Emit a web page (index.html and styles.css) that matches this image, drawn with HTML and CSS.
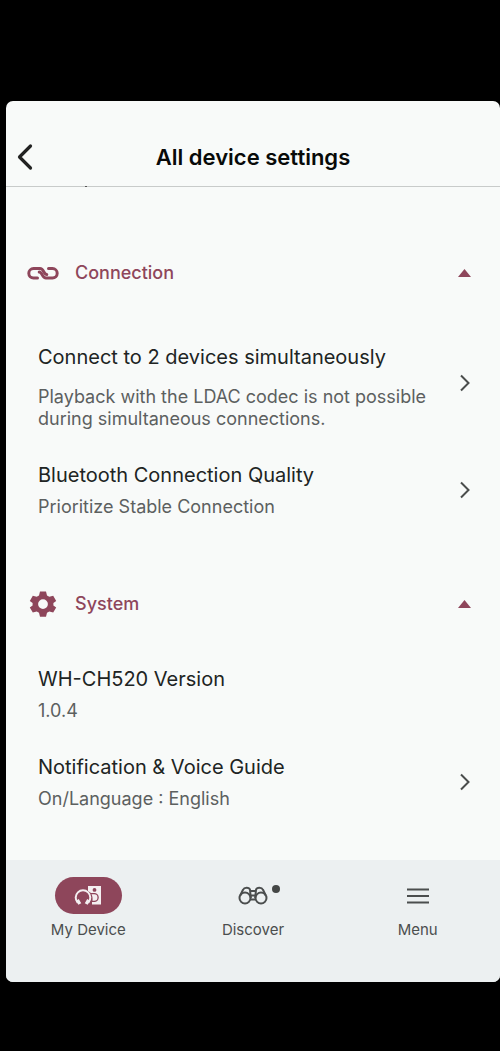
FILE: index.html
```html
<!DOCTYPE html>
<html lang="en">
<head>
<meta charset="utf-8">
<meta name="viewport" content="width=device-width, initial-scale=1">
<title>All device settings</title>
<link rel="stylesheet" href="styles.css">
</head>
<body>
<div class="app">
  <header class="topbar">
    <button class="back" type="button" aria-label="Back">
      <svg width="18" height="28" viewBox="0 0 18 28"><path d="M14.500 3 3.500 14l11 11" fill="none" stroke="currentColor" stroke-width="3.200" stroke-linecap="round" stroke-linejoin="round"/></svg>
    </button>
    <h1 class="title">All device settings</h1>
  </header>

  <main class="content">
    <section class="section">
      <button class="section-head" type="button" aria-expanded="true">
        <svg class="section-icon" width="34" height="28" viewBox="0 0 34 28" fill="none" stroke="currentColor" stroke-width="3" stroke-linecap="round">
          <path d="M11.500 19H7.500a4.700 4.700 0 0 1 0-9.400h6.500c4 0 3.500 5.900 6.800 5.900"/>
          <path d="M22.500 9.600h4a4.700 4.700 0 0 1 0 9.400H20c-4 0-3.500-5.900-6.800-5.900"/>
        </svg>
        <span class="section-name">Connection</span>
        <svg class="caret" width="13" height="8" viewBox="0 0 13 8"><path d="M6.500 0 13 8H0z" fill="currentColor"/></svg>
      </button>
      <ul class="items">
        <li><a class="item item-long" href="#multipoint">
          <span class="item-text"><span class="item-title">Connect to 2 devices simultaneously</span>
          <span class="item-note">Playback with the LDAC codec is not possible during simultaneous connections.</span></span>
          <svg class="chevron" width="12" height="18" viewBox="0 0 12 18"><path d="M2 1.500 9.500 9 2 16.500" fill="none" stroke="currentColor" stroke-width="2"/></svg>
        </a></li>
        <li><a class="item" href="#quality">
          <span class="item-text"><span class="item-title">Bluetooth Connection Quality</span>
          <span class="item-note">Prioritize Stable Connection</span></span>
          <svg class="chevron" width="12" height="18" viewBox="0 0 12 18"><path d="M2 1.500 9.500 9 2 16.500" fill="none" stroke="currentColor" stroke-width="2"/></svg>
        </a></li>
      </ul>
    </section>

    <section class="section">
      <button class="section-head" type="button" aria-expanded="true">
        <svg class="section-icon" width="34" height="28" viewBox="0 0 34 28">
          <path fill="currentColor" fill-rule="evenodd" d="M14 1.500h6l1 4 2.300 1.300 3.900-1.100 3 5.200-2.800 2v2.500l2.800 2-3 5.200-3.900-1.100-2.300 1.300-1 4h-6l-1-4-2.300-1.300-3.900 1.100-3-5.200 2.800-2v-2.500l-2.800-2 3-5.200 3.900 1.100L13 5.500zM17 9.200a4.900 4.900 0 1 0 0 9.800 4.900 4.900 0 0 0 0-9.800z"/>
        </svg>
        <span class="section-name">System</span>
        <svg class="caret" width="13" height="8" viewBox="0 0 13 8"><path d="M6.500 0 13 8H0z" fill="currentColor"/></svg>
      </button>
      <ul class="items">
        <li><div class="item">
          <span class="item-text"><span class="item-title">WH-CH520 Version</span>
          <span class="item-note">1.0.4</span></span>
        </div></li>
        <li><a class="item" href="#voice">
          <span class="item-text"><span class="item-title">Notification &amp; Voice Guide</span>
          <span class="item-note">On/Language : English</span></span>
          <svg class="chevron" width="12" height="18" viewBox="0 0 12 18"><path d="M2 1.500 9.500 9 2 16.500" fill="none" stroke="currentColor" stroke-width="2"/></svg>
        </a></li>
      </ul>
    </section>
  </main>

  <nav class="tabs">
    <a class="tab" href="#device" aria-current="page">
      <span class="tab-icon tab-icon-active">
        <svg width="28" height="22" viewBox="0 0 28 22">
          <path fill="currentColor" fill-rule="evenodd" d="M14 1h13v18.500h-9V17h2.300a4.500 4.500 0 0 0 0-9H17l-3-2zM20.500 3a1.900 1.900 0 1 0 0 3.800 1.900 1.900 0 0 0 0-3.800z"/>
          <path fill="currentColor" d="M17.500 9.200h2.700a3.200 3.200 0 0 1 0 6.500h-1.700c.3-2.300 0-4.500-1-6.500z"/>
          <path d="M3.600 17.500A7.300 7.300 0 1 1 14.400 17.500" fill="none" stroke="currentColor" stroke-width="2"/>
          <path d="m3.300 14.800 2.500 4.200M14.700 14.800 12.200 19" fill="none" stroke="currentColor" stroke-width="3.400"/>
        </svg>
      </span>
      <span class="tab-label">My Device</span>
    </a>
    <a class="tab" href="#discover">
      <span class="tab-icon">
        <svg width="30" height="20" viewBox="0 0 30 20" fill="none" stroke="currentColor" stroke-width="2">
          <circle cx="7" cy="12" r="5.500"/><circle cx="23" cy="12" r="5.500"/>
          <path d="M2.200 9.500 5 3.800C6.200 1.200 11.200 1.200 12 3.800l.8 8.200M27.800 9.500 25 3.800C23.800 1.200 18.800 1.200 18 3.800l-.8 8.200M12 5h6M12.500 9.500h5M12.500 13.500h5"/>
        </svg>
        <span class="dot"></span>
      </span>
      <span class="tab-label">Discover</span>
    </a>
    <a class="tab" href="#menu">
      <span class="tab-icon">
        <svg width="22" height="16" viewBox="0 0 22 16"><path d="M0 1.500h22M0 8h22M0 14.500h22" stroke="currentColor" stroke-width="2"/></svg>
      </span>
      <span class="tab-label">Menu</span>
    </a>
  </nav>
</div>
</body>
</html>
```
FILE: styles.css
```css
* { box-sizing: border-box; }

body {
  margin: 0;
  min-height: 100vh;
  padding: 101px 0 69px 6px;
  display: flex;
  background: #000;
  color: #202423;
  font-family: Inter, "Liberation Sans", sans-serif;
}

svg { display: block; flex: none; }
a { color: inherit; text-decoration: none; }
button { border: 0; padding: 0; background: none; font: inherit; color: inherit; }

.app {
  flex: 1;
  min-width: 0;
  display: flex;
  flex-direction: column;
  background: #f8faf9;
  border-radius: 7px;
  overflow: hidden;
}

.topbar {
  display: grid;
  grid-template-columns: 40px 1fr 40px;
  align-items: center;
  padding-top: 26px;
  height: 86px;
  border-bottom: 1px solid #c8cbca;
}
.back { padding-left: 10px; color: #222; }
.title {
  margin: 0;
  text-align: center;
  font-size: 22px;
  line-height: 28px;
  font-weight: 600;
  color: #080a09;
}

.content { flex: 1; position: relative; }
.content::before {
  content: "";
  position: absolute;
  top: -1px;
  left: 79px;
  width: 2px;
  height: 1px;
  background: #555;
}

.section { padding-top: 54px; }
.section-head {
  display: flex;
  align-items: center;
  width: 100%;
  height: 64px;
  padding: 0 29px 0 20px;
  color: #8e465b;
  text-align: left;
}
.section-name {
  flex: 1;
  padding-left: 15px;
  font-size: 18px;
  line-height: 22px;
  font-weight: 500;
}

.items {
  display: flex;
  flex-direction: column;
  gap: 32px;
  list-style: none;
  margin: 0;
  padding: 30px 29px 0 32px;
}
.item { display: flex; align-items: center; }
.item-text { flex: 1; display: flex; flex-direction: column; gap: 8px; padding-right: 24px; }
.item-title { font-size: 20px; line-height: 26px; }
.item-note { font-size: 18px; line-height: 22px; color: #5c605f; }
.item-long .item-text { gap: 16px; padding-top: 9px; }
.chevron { color: #4a4d4c; }

.tabs {
  display: grid;
  grid-template-columns: repeat(3, 1fr);
  height: 122px;
  padding-top: 17px;
  background: #ecf0f1;
  color: #4b4e4e;
}
.tab { display: flex; flex-direction: column; align-items: center; gap: 6px; }
.tab-icon {
  position: relative;
  display: flex;
  align-items: center;
  justify-content: center;
  width: 67px;
  height: 37px;
  border-radius: 19px;
}
.tab-icon-active { background: #8e465b; color: #f4eff1; }
.tab-label { font-size: 15px; line-height: 20px; }
.dot {
  position: absolute;
  top: 8px;
  right: 6px;
  width: 8px;
  height: 8px;
  border-radius: 50%;
  background: #444746;
}
```
